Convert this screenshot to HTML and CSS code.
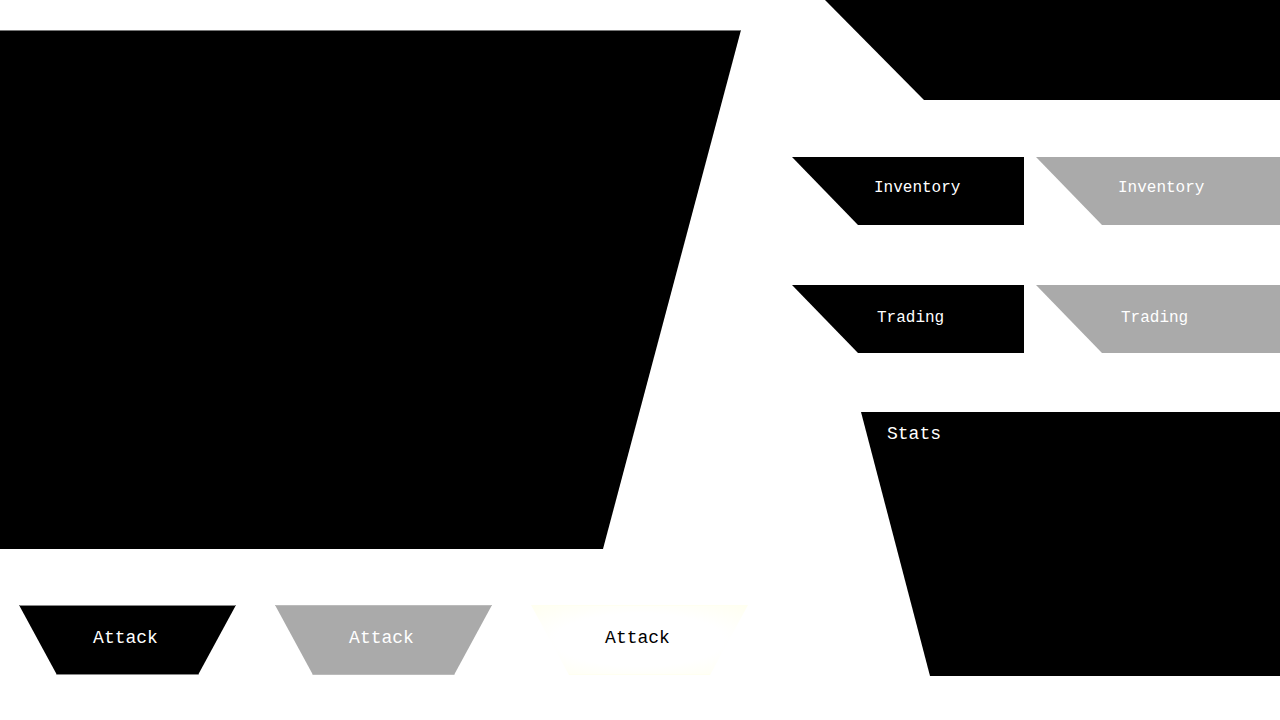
FILE: index.html
```html
<!DOCTYPE html>
<html lang="en">
  <head>
    <meta charset="UTF-8" />
    <meta name="viewport" content="width=device-width, initial-scale=1.0" />
    <title>Game HUD</title>
    <link rel="stylesheet" href="styles.css">
  </head>
  <body>
    <div class="left">
      <div class="viewport"></div>

      <div class="actions">
        <button class="attack">Attack</button>
        <button class="attack alt">Attack</button>
        <button class="attack light">Attack</button>
      </div>
    </div>

    <div class="right">
      <div class="banner"></div>

      <div class="menu-row">
        <button class="menu-btn">Inventory</button>
        <button class="menu-btn alt">Inventory</button>
      </div>
      <div class="menu-row trade">
        <button class="menu-btn">Trading</button>
        <button class="menu-btn alt">Trading</button>
      </div>

      <div class="stats">Stats</div>
    </div>
  </body>
</html>
```

FILE: styles.css
```css
body {
  font-family: 'Liberation Mono', 'Courier New', monospace;
  margin: 0;
  width: 1280px;
  height: 720px;
  overflow: hidden;
  display: flex;
  background: white;
}
button {
  font-family: inherit;
  border: none;
  margin: 0;
  cursor: pointer;
}
.left {
  flex: none;
  width: 792px;
}
.viewport {
  margin-top: 30px;
  width: 741px;
  height: 519px;
  background: black;
  border-top: 1px solid #777;
  box-sizing: border-box;
  clip-path: polygon(0 0, 741px 0, 603px 519px, 0 519px);
}
.actions {
  display: flex;
  gap: 39px;
  margin-top: 56px;
  padding-left: 19px;
}
.attack {
  width: 217px;
  height: 70px;
  padding: 0 4px 4px 0;
  background: black;
  color: white;
  font-size: 18px;
  border-top: 1px solid #888;
  border-bottom: 1px solid #888;
  clip-path: polygon(0 0, 100% 0, 179px 100%, 38px 100%);
}
.attack.alt {
  background: #aaa;
  border-color: #bbb;
}
.attack.light {
  background: radial-gradient(ellipse at center, white 55%, #fffff0 100%);
  color: black;
  border-color: #fffff0;
}
.right {
  flex: 1;
  min-width: 0;
  overflow: hidden;
  display: flex;
  flex-direction: column;
}
.banner {
  margin-left: 33px;
  height: 100px;
  background: black;
  clip-path: polygon(0 0, 100% 0, 100% 100%, 99px 100%);
}
.menu-row {
  display: flex;
  gap: 12px;
  margin-top: 57px;
}
.menu-row.trade {
  margin-top: 60px;
}
.menu-btn {
  flex: none;
  width: 232px;
  height: 68px;
  padding: 0 0 7px 82px;
  text-align: left;
  background: black;
  color: white;
  font-size: 16px;
  clip-path: polygon(0 0, 100% 0, 100% 100%, 66px 100%);
}
.trade .menu-btn {
  padding: 0 0 2px 85px;
}
.menu-btn.alt {
  width: 260px;
  background: #aaa;
}
.stats {
  margin-top: 59px;
  margin-left: 69px;
  height: 264px;
  padding: 12px 26px;
  box-sizing: border-box;
  background: black;
  color: white;
  font-size: 18px;
  clip-path: polygon(0 0, 100% 0, 100% 100%, 69px 100%);
}
```
